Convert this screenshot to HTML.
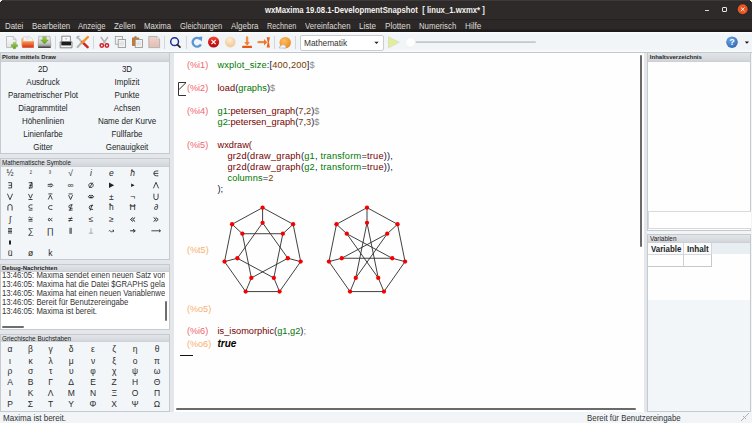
<!DOCTYPE html>
<html><head><meta charset="utf-8">
<style>
*{margin:0;padding:0;box-sizing:border-box}
html,body{width:752px;height:423px;overflow:hidden;background:#f1f5f8;font-family:"Liberation Sans",sans-serif;position:relative}
.t{position:absolute;white-space:pre;line-height:1}
.r{position:absolute}
svg{position:absolute;overflow:visible}
</style></head><body>
<div class="r" style="left:0px;top:0px;width:752px;height:20px;background:#2d2a29"></div>
<div class="r" style="left:0px;top:0px;width:752px;height:1px;background:#3d3a39"></div>
<div class="r" style="left:0px;top:19px;width:752px;height:1px;background:#242120"></div>
<div class="t" style="left:265.40px;top:6px;font-size:8.5px;color:#f4f2f0;font-weight:bold;font-style:normal;transform:scaleX(0.909);transform-origin:left;">wxMaxima 19.08.1-DevelopmentSnapshot  [ linux_1.wxmx* ]</div>
<div class="r" style="left:705px;top:10px;width:4px;height:1px;background:#d8d6d4"></div>
<div class="r" style="left:722px;top:7px;width:5px;height:5px;border:1px solid #e8e6e4;border-radius:1px"></div>
<svg style="left:0;top:0" width="752" height="20"><circle cx="742.7" cy="9.3" r="5.8" fill="#1f2a2c"/><circle cx="742.7" cy="9.3" r="5" fill="#e95420"/><path d="M740.9 7.5 L744.5 11.1 M744.5 7.5 L740.9 11.1" stroke="#fff" stroke-width="0.9"/></svg>
<div class="r" style="left:0px;top:0px;width:2px;height:1px;background:#f0f0f0"></div>
<div class="r" style="left:0px;top:1px;width:1px;height:1px;background:#e8e8e8"></div>
<div class="r" style="left:1px;top:1px;width:1px;height:1px;background:#121010"></div>
<div class="r" style="left:750px;top:0px;width:2px;height:1px;background:#f0f0f0"></div>
<div class="r" style="left:751px;top:1px;width:1px;height:1px;background:#e8e8e8"></div>
<div class="r" style="left:750px;top:1px;width:1px;height:1px;background:#121010"></div>
<div class="r" style="left:0px;top:20px;width:752px;height:12px;background:#2b2827"></div>
<div class="r" style="left:0px;top:29px;width:752px;height:3px;background:linear-gradient(#252221,#1b1918)"></div>
<div class="t" style="left:4.65px;top:22px;font-size:8.5px;color:#dedad6;font-weight:normal;font-style:normal;transform:scaleX(0.924);transform-origin:left;">Datei</div>
<div class="t" style="left:31.60px;top:22px;font-size:8.5px;color:#dedad6;font-weight:normal;font-style:normal;transform:scaleX(0.929);transform-origin:left;">Bearbeiten</div>
<div class="t" style="left:78.10px;top:22px;font-size:8.5px;color:#dedad6;font-weight:normal;font-style:normal;transform:scaleX(0.896);transform-origin:left;">Anzeige</div>
<div class="t" style="left:114.20px;top:22px;font-size:8.5px;color:#dedad6;font-weight:normal;font-style:normal;transform:scaleX(0.931);transform-origin:left;">Zellen</div>
<div class="t" style="left:144.10px;top:22px;font-size:8.5px;color:#dedad6;font-weight:normal;font-style:normal;transform:scaleX(0.911);transform-origin:left;">Maxima</div>
<div class="t" style="left:180.10px;top:22px;font-size:8.5px;color:#dedad6;font-weight:normal;font-style:normal;transform:scaleX(0.883);transform-origin:left;">Gleichungen</div>
<div class="t" style="left:230.80px;top:22px;font-size:8.5px;color:#dedad6;font-weight:normal;font-style:normal;transform:scaleX(0.939);transform-origin:left;">Algebra</div>
<div class="t" style="left:266.90px;top:22px;font-size:8.5px;color:#dedad6;font-weight:normal;font-style:normal;transform:scaleX(0.862);transform-origin:left;">Rechnen</div>
<div class="t" style="left:304.50px;top:22px;font-size:8.5px;color:#dedad6;font-weight:normal;font-style:normal;transform:scaleX(0.917);transform-origin:left;">Vereinfachen</div>
<div class="t" style="left:358.90px;top:22px;font-size:8.5px;color:#dedad6;font-weight:normal;font-style:normal;transform:scaleX(0.952);transform-origin:left;">Liste</div>
<div class="t" style="left:385.00px;top:22px;font-size:8.5px;color:#dedad6;font-weight:normal;font-style:normal;transform:scaleX(0.962);transform-origin:left;">Plotten</div>
<div class="t" style="left:418.90px;top:22px;font-size:8.5px;color:#dedad6;font-weight:normal;font-style:normal;transform:scaleX(0.916);transform-origin:left;">Numerisch</div>
<div class="t" style="left:464.90px;top:22px;font-size:8.5px;color:#dedad6;font-weight:normal;font-style:normal;transform:scaleX(0.965);transform-origin:left;">Hilfe</div>
<div class="r" style="left:0px;top:32px;width:752px;height:20px;background:linear-gradient(#fbfdfe,#f1f5f8 15%,#f1f5f8 85%,#f9fbfc)"></div>
<div class="r" style="left:0px;top:52px;width:752px;height:1px;background:#c2c8cd"></div>
<div class="r" style="left:55px;top:36px;width:1px;height:13px;background:#d3d7db"></div>
<div class="r" style="left:93px;top:36px;width:1px;height:13px;background:#d3d7db"></div>
<div class="r" style="left:164px;top:36px;width:1px;height:13px;background:#d3d7db"></div>
<div class="r" style="left:186px;top:36px;width:1px;height:13px;background:#d3d7db"></div>
<div class="r" style="left:274px;top:36px;width:1px;height:13px;background:#d3d7db"></div>
<div class="r" style="left:295px;top:36px;width:1px;height:13px;background:#d3d7db"></div>
<div class="r" style="left:300px;top:35px;width:84px;height:16px;background:#fff;border:1px solid #c9cdd1;border-radius:2px"></div>
<div class="t" style="left:303.80px;top:39px;font-size:8.5px;color:#333;font-weight:normal;font-style:normal;transform:scaleX(0.98);transform-origin:left;">Mathematik</div>
<svg style="left:0;top:0" width="752" height="60"><path d="M374.3 41.8 L378.7 41.8 L376.5 44 Z" fill="#222"/></svg>
<svg style="left:0;top:0" width="752" height="60" viewBox="0 0 752 60">
<defs>
<linearGradient id="gpage" x1="0" y1="0" x2="0" y2="1"><stop offset="0" stop-color="#fbfbfb"/><stop offset="1" stop-color="#e2e2e2"/></linearGradient>
<linearGradient id="ggreen" x1="0" y1="0" x2="0" y2="1"><stop offset="0" stop-color="#a6d455"/><stop offset="1" stop-color="#5a9a18"/></linearGradient>
<linearGradient id="gfold" x1="0" y1="0" x2="0" y2="1"><stop offset="0" stop-color="#f7a05a"/><stop offset="1" stop-color="#d52a0e"/></linearGradient>
<linearGradient id="gdrive" x1="0" y1="0" x2="0" y2="1"><stop offset="0" stop-color="#f2f2f2"/><stop offset="0.7" stop-color="#c8c8c8"/><stop offset="1" stop-color="#9a9a9a"/></linearGradient>
<linearGradient id="gred" x1="0" y1="0" x2="0" y2="1"><stop offset="0" stop-color="#f0553a"/><stop offset="0.5" stop-color="#d81818"/><stop offset="1" stop-color="#a80c0c"/></linearGradient>
<radialGradient id="gpeach" cx="0.45" cy="0.3" r="0.7"><stop offset="0" stop-color="#fff0d8"/><stop offset="0.5" stop-color="#f8d8b0"/><stop offset="1" stop-color="#f0c898"/></radialGradient>
<linearGradient id="gorange" x1="0" y1="0" x2="0" y2="1"><stop offset="0" stop-color="#f8a050"/><stop offset="1" stop-color="#e8500c"/></linearGradient>
<radialGradient id="gsun" cx="0.4" cy="0.35" r="0.7"><stop offset="0" stop-color="#fcc060"/><stop offset="1" stop-color="#ec8a1c"/></radialGradient>
<linearGradient id="gpink" x1="0" y1="0" x2="0" y2="1"><stop offset="0" stop-color="#f0d4cc"/><stop offset="1" stop-color="#e4bcb2"/></linearGradient>
</defs>
<path d="M6.5 36.5 L13.2 36.5 L16 39.3 L16 47.5 L6.5 47.5 Z" fill="url(#gpage)" stroke="#b4b4b4" stroke-width="0.8"/>
<path d="M13.2 36.5 L13.2 39.3 L16 39.3" fill="#e8e8e8" stroke="#b4b4b4" stroke-width="0.6"/>
<path d="M13.3 42.6 h2.2 v2 h2 v2.2 h-2 v2 h-2.2 v-2 h-2 v-2.2 h2 Z" fill="url(#ggreen)" stroke="#6a9a2a" stroke-width="0.35"/>
<path d="M21.3 38.2 L23.5 38.2 L23.5 46 L21.3 46 Z" fill="#f5b06a"/>
<path d="M23.3 36.8 L29.6 36.8 L32.6 39.2 L32.6 43 L23.3 43 Z" fill="#f6f6f6" stroke="#c4c4c4" stroke-width="0.6"/>
<path d="M26 37.8 L28 37.8 M26 39 L30 39" stroke="#c8c8c8" stroke-width="0.5"/>
<path d="M22.2 41 L34 41 L33.8 47.8 L22.2 47.8 Z" fill="url(#gfold)"/>
<path d="M22.4 41.3 L33.6 41.3" stroke="#f8c090" stroke-width="0.6"/>
<path d="M38.8 36.3 L50 36.3 L51 46 L38 46 Z" fill="url(#gdrive)" stroke="#9c9c9c" stroke-width="0.6"/>
<rect x="38" y="46.2" width="12.9" height="1.7" rx="0.6" fill="#4a4a4a"/>
<path d="M42.8 36.8 L46.2 36.8 L46.2 40 L48.3 40 L44.5 43.9 L40.7 40 L42.8 40 Z" fill="url(#ggreen)" stroke="#6a9a20" stroke-width="0.4"/>
<path d="M61.8 36.2 L70.4 36.2 L70.4 41.5 L61.8 41.5 Z" fill="#fafafa" stroke="#707070" stroke-width="0.8"/>
<path d="M65 38.6 L67.2 38.6 L66.1 39.8 Z" fill="#888"/>
<path d="M60.2 41.8 L72 41.8 L72 47.8 L60.2 47.8 Z" fill="#f4f4f4" stroke="#6c6c6c" stroke-width="0.8"/>
<rect x="61.3" y="42" width="9.8" height="3.4" fill="#1c1c1c"/>
<path d="M70.6 46.2 L71.3 46.2" stroke="#7fc040" stroke-width="0.8"/>
<path d="M77.6 47 L82.5 41.8" stroke="#b4b4b4" stroke-width="2" stroke-linecap="round"/>
<path d="M77.8 37.6 L82 42" stroke="#bcbcbc" stroke-width="1.9" stroke-linecap="round"/>
<path d="M76.8 38.5 A2 2 0 0 1 79.5 36.4" stroke="#a8a8a8" stroke-width="1.2" fill="none"/>
<path d="M82.3 42.2 L87.6 47.1" stroke="#d02424" stroke-width="2.5" stroke-linecap="round"/>
<path d="M87.8 37.2 L82.2 42.6" stroke="#f0962c" stroke-width="2.5" stroke-linecap="round"/>
<path d="M100.8 37 L105.2 43 M108 37 L103.6 43" stroke="#b4b4b4" stroke-width="1.6"/>
<circle cx="101.8" cy="45.5" r="1.7" fill="none" stroke="#d01e2a" stroke-width="1.5"/>
<circle cx="106.9" cy="45.5" r="1.7" fill="none" stroke="#d01e2a" stroke-width="1.5"/>
<rect x="115.3" y="36.4" width="7.2" height="7.8" fill="#f2f2f2" stroke="#9a9a9a" stroke-width="0.8"/>
<rect x="118.2" y="39.6" width="7.4" height="7.8" fill="#f2f2f2" stroke="#909090" stroke-width="0.8"/>
<path d="M119.5 42 h4.5 M119.5 43.5 h4.5 M119.5 45 h4.5" stroke="#c8c8c8" stroke-width="0.5"/>
<rect x="132" y="37.4" width="7.2" height="8.6" rx="0.4" fill="#c47a34"/>
<rect x="134.3" y="36.2" width="2.2" height="2.2" fill="#888"/>
<rect x="135.2" y="39.6" width="7.4" height="7.8" fill="#f2f2f2" stroke="#8e8e8e" stroke-width="0.8"/>
<path d="M136.5 42 h4.5 M136.5 43.5 h4.5 M136.5 45 h4.5" stroke="#c8c8c8" stroke-width="0.5"/>
<path d="M148.8 36.5 L157 36.5 L159.6 39 L159.6 47.6 L148.8 47.6 Z" fill="url(#gpink)" stroke="#a8a8a8" stroke-width="0.8"/>
<path d="M156.5 36.8 L156.5 39.3 L159.4 39.3" fill="#f4f4f4" stroke="#b0b0b0" stroke-width="0.5"/>
<circle cx="174.6" cy="41.7" r="3.9" fill="none" stroke="#1d2c98" stroke-width="1.5"/>
<path d="M177.4 44.6 L180 47.1" stroke="#222" stroke-width="1.7" stroke-linecap="round"/>
<path d="M200.2 39.2 A4.4 4.4 0 1 0 200.9 44.4" fill="none" stroke="#5a96d6" stroke-width="2.3"/>
<path d="M197.2 37.2 L202.3 36.6 L201.8 41.6 Z" fill="#5a96d6"/>
<circle cx="213.6" cy="42" r="5.6" fill="url(#gred)"/>
<path d="M211.5 39.9 L215.7 44.1 M215.7 39.9 L211.5 44.1" stroke="#fff" stroke-width="1.3"/>
<circle cx="230.3" cy="42.1" r="5.3" fill="url(#gpeach)"/>
<path d="M247.1 37.4 L247.1 43" stroke="#f49048" stroke-width="2.4" stroke-linecap="round"/>
<path d="M244.2 42.2 L250 42.2 L247.1 45.4 Z" fill="#f07a30"/>
<rect x="242.2" y="45.8" width="9.8" height="2.2" rx="0.5" fill="#e45a12"/>
<path d="M258.5 42.2 L265 42.2" stroke="#f08a3a" stroke-width="2.2" stroke-linecap="round"/>
<path d="M264 39 L267.2 42.2 L264 45.4 Z" fill="#ec7426"/>
<path d="M266.6 37.2 L270 37.2 L268.9 42.2 L270 47.4 L266.6 47.4 L267.7 42.2 Z" fill="#ea6420"/>
<circle cx="285.2" cy="42.6" r="5.7" fill="url(#gsun)"/>
<path d="M279.2 48 Q279 45.9 281.2 46 Q282 43.9 284 45 Q286.2 45 286 48 Z" fill="#f4f6f8" stroke="#a8acb0" stroke-width="0.6"/>
<path d="M388.5 36.8 L399.3 42.3 L388.5 47.8 Z" fill="#e4eca4" stroke="#c8d890" stroke-width="0.5"/>
<rect x="413" y="41.2" width="123" height="1.8" rx="0.9" fill="#c6c8c6"/>
<circle cx="410.5" cy="42.2" r="5" fill="#fdfdfb" stroke="#e8eae8" stroke-width="0.5"/>
<defs><radialGradient id="ghelp" cx="0.4" cy="0.3" r="0.8"><stop offset="0" stop-color="#6ea6e4"/><stop offset="1" stop-color="#2a64b0"/></radialGradient></defs>
<circle cx="732" cy="42.2" r="5.8" fill="url(#ghelp)"/>
<text x="732" y="45.4" font-family="Liberation Sans" font-size="8.5" font-weight="bold" fill="#fff" text-anchor="middle">?</text>
<path d="M744.8 41.6 L749 41.6 L746.9 43.8 Z" fill="#111"/>
</svg>
<div class="r" style="left:0px;top:53px;width:170px;height:359px;background:#e3e7eb"></div>
<div class="r" style="left:0px;top:52px;width:170px;height:102px;background:#f2f6f9;border:1px solid #c6cacd"></div>
<div class="r" style="left:1px;top:53px;width:168px;height:9px;background:linear-gradient(#e2e5e8,#d4d8dc 80%,#c9cdd1)"></div>
<div class="t" style="left:2.00px;top:54px;font-size:6px;color:#262626;font-weight:bold;font-style:normal;transform-origin:left;">Plotte mittels Draw</div>
<div class="r" style="left:0px;top:158px;width:170px;height:102px;background:#f2f6f9;border:1px solid #c6cacd"></div>
<div class="r" style="left:1px;top:159px;width:168px;height:8px;background:linear-gradient(#e2e5e8,#d4d8dc 80%,#c9cdd1)"></div>
<div class="t" style="left:2.00px;top:159px;font-size:7px;color:#1a1a1a;font-weight:normal;font-style:normal;transform:scaleX(0.9);transform-origin:left;">Mathematische Symbole</div>
<div class="r" style="left:0px;top:264px;width:170px;height:66px;background:#fff;border:1px solid #c6cacd"></div>
<div class="r" style="left:1px;top:265px;width:168px;height:7px;background:linear-gradient(#e2e5e8,#d4d8dc 80%,#c9cdd1)"></div>
<div class="t" style="left:2.00px;top:265px;font-size:6px;color:#262626;font-weight:bold;font-style:normal;transform-origin:left;">Debug-Nachrichten</div>
<div class="r" style="left:0px;top:334px;width:170px;height:78px;background:#f2f6f9;border:1px solid #c6cacd"></div>
<div class="r" style="left:1px;top:335px;width:168px;height:7px;background:linear-gradient(#e2e5e8,#d4d8dc 80%,#c9cdd1)"></div>
<div class="t" style="left:2.00px;top:335px;font-size:7px;color:#1a1a1a;font-weight:normal;font-style:normal;transform:scaleX(0.91);transform-origin:left;">Griechische Buchstaben</div>
<div class="t" style="left:-57.30px;width:200px;text-align:center;top:65px;font-size:8.5px;color:#1e1e1e;font-weight:normal;font-style:normal;transform:scaleX(0.94);transform-origin:center;">2D</div>
<div class="t" style="left:26.60px;width:200px;text-align:center;top:65px;font-size:8.5px;color:#1e1e1e;font-weight:normal;font-style:normal;transform:scaleX(0.94);transform-origin:center;">3D</div>
<div class="t" style="left:-57.30px;width:200px;text-align:center;top:78px;font-size:8.5px;color:#1e1e1e;font-weight:normal;font-style:normal;transform:scaleX(0.94);transform-origin:center;">Ausdruck</div>
<div class="t" style="left:26.60px;width:200px;text-align:center;top:78px;font-size:8.5px;color:#1e1e1e;font-weight:normal;font-style:normal;transform:scaleX(0.94);transform-origin:center;">Implizit</div>
<div class="t" style="left:-57.30px;width:200px;text-align:center;top:91px;font-size:8.5px;color:#1e1e1e;font-weight:normal;font-style:normal;transform:scaleX(0.94);transform-origin:center;">Parametrischer Plot</div>
<div class="t" style="left:26.60px;width:200px;text-align:center;top:91px;font-size:8.5px;color:#1e1e1e;font-weight:normal;font-style:normal;transform:scaleX(0.94);transform-origin:center;">Punkte</div>
<div class="t" style="left:-57.30px;width:200px;text-align:center;top:104px;font-size:8.5px;color:#1e1e1e;font-weight:normal;font-style:normal;transform:scaleX(0.94);transform-origin:center;">Diagrammtitel</div>
<div class="t" style="left:26.60px;width:200px;text-align:center;top:104px;font-size:8.5px;color:#1e1e1e;font-weight:normal;font-style:normal;transform:scaleX(0.94);transform-origin:center;">Achsen</div>
<div class="t" style="left:-57.30px;width:200px;text-align:center;top:117px;font-size:8.5px;color:#1e1e1e;font-weight:normal;font-style:normal;transform:scaleX(0.94);transform-origin:center;">Höhenlinien</div>
<div class="t" style="left:26.60px;width:200px;text-align:center;top:117px;font-size:8.5px;color:#1e1e1e;font-weight:normal;font-style:normal;transform:scaleX(0.94);transform-origin:center;">Name der Kurve</div>
<div class="t" style="left:-57.30px;width:200px;text-align:center;top:130px;font-size:8.5px;color:#1e1e1e;font-weight:normal;font-style:normal;transform:scaleX(0.94);transform-origin:center;">Linienfarbe</div>
<div class="t" style="left:26.60px;width:200px;text-align:center;top:130px;font-size:8.5px;color:#1e1e1e;font-weight:normal;font-style:normal;transform:scaleX(0.94);transform-origin:center;">Füllfarbe</div>
<div class="t" style="left:-57.30px;width:200px;text-align:center;top:143px;font-size:8.5px;color:#1e1e1e;font-weight:normal;font-style:normal;transform:scaleX(0.94);transform-origin:center;">Gitter</div>
<div class="t" style="left:26.60px;width:200px;text-align:center;top:143px;font-size:8.5px;color:#1e1e1e;font-weight:normal;font-style:normal;transform:scaleX(0.94);transform-origin:center;">Genauigkeit</div>
<div class="t" style="left:-90.00px;width:200px;text-align:center;top:169px;font-size:8.5px;color:#222;font-weight:normal;font-style:normal;transform-origin:center;">½</div>
<div class="t" style="left:-69.50px;width:200px;text-align:center;top:169px;font-size:8.5px;color:#333;font-weight:normal;font-style:normal;transform:scaleX(0.8);transform-origin:center;">²</div>
<div class="t" style="left:-49.70px;width:200px;text-align:center;top:169px;font-size:8.5px;color:#333;font-weight:normal;font-style:normal;transform:scaleX(0.8);transform-origin:center;">³</div>
<div class="t" style="left:-29.40px;width:200px;text-align:center;top:169px;font-size:8.5px;color:#222;font-weight:normal;font-style:normal;transform-origin:center;">√</div>
<div class="t" style="left:-9.00px;width:200px;text-align:center;top:169px;font-size:8.5px;color:#222;font-weight:normal;font-style:normal;transform-origin:center;"><i>i</i></div>
<div class="t" style="left:11.40px;width:200px;text-align:center;top:169px;font-size:8.5px;color:#222;font-weight:normal;font-style:normal;transform-origin:center;"><i>e</i></div>
<div class="t" style="left:32.70px;width:200px;text-align:center;top:169px;font-size:8.5px;color:#222;font-weight:normal;font-style:normal;transform-origin:center;"><i>ħ</i></div>
<div class="t" style="left:-29.40px;width:200px;text-align:center;top:181px;font-size:8.5px;color:#222;font-weight:normal;font-style:normal;transform-origin:center;">∞</div>
<div class="t" style="left:11.40px;width:200px;text-align:center;top:193px;font-size:8.5px;color:#222;font-weight:normal;font-style:normal;transform-origin:center;">±</div>
<div class="t" style="left:32.70px;width:200px;text-align:center;top:193px;font-size:8.5px;color:#222;font-weight:normal;font-style:normal;transform-origin:center;">¬</div>
<div class="t" style="left:11.40px;width:200px;text-align:center;top:203px;font-size:8.5px;color:#222;font-weight:normal;font-style:normal;transform-origin:center;">ħ</div>
<div class="t" style="left:32.70px;width:200px;text-align:center;top:203px;font-size:8.5px;color:#222;font-weight:normal;font-style:normal;transform-origin:center;">Ħ</div>
<div class="t" style="left:56.00px;width:200px;text-align:center;top:203px;font-size:8.5px;color:#222;font-weight:normal;font-style:normal;transform-origin:center;">∂</div>
<div class="t" style="left:-90.00px;width:200px;text-align:center;top:215px;font-size:8.5px;color:#222;font-weight:normal;font-style:normal;transform-origin:center;">∫</div>
<div class="t" style="left:-29.40px;width:200px;text-align:center;top:215px;font-size:8.5px;color:#222;font-weight:normal;font-style:normal;transform-origin:center;">≠</div>
<div class="t" style="left:-9.00px;width:200px;text-align:center;top:215px;font-size:8.5px;color:#222;font-weight:normal;font-style:normal;transform-origin:center;">≤</div>
<div class="t" style="left:11.40px;width:200px;text-align:center;top:215px;font-size:8.5px;color:#222;font-weight:normal;font-style:normal;transform-origin:center;">≥</div>
<div class="t" style="left:-69.50px;width:200px;text-align:center;top:227px;font-size:8.5px;color:#222;font-weight:normal;font-style:normal;transform-origin:center;">∑</div>
<div class="t" style="left:-49.70px;width:200px;text-align:center;top:227px;font-size:8.5px;color:#222;font-weight:normal;font-style:normal;transform-origin:center;">∏</div>
<div class="t" style="left:-90.00px;width:200px;text-align:center;top:249px;font-size:8.5px;color:#222;font-weight:normal;font-style:normal;transform-origin:center;">ü</div>
<div class="t" style="left:-69.50px;width:200px;text-align:center;top:249px;font-size:8.5px;color:#222;font-weight:normal;font-style:normal;transform-origin:center;">ø</div>
<div class="t" style="left:-49.70px;width:200px;text-align:center;top:249px;font-size:8.5px;color:#222;font-weight:normal;font-style:normal;transform-origin:center;">k</div>
<svg style="left:0;top:0" width="752" height="423">
<path transform="translate(156 173.4)" d="M2.3 -2.4 H0.2 A2.4 2.4 0 0 0 0.2 2.4 H2.3 M-2.2 0 H2.3" fill="none" stroke="#262626" stroke-width="0.85"/>
<path transform="translate(10 185.3)" d="M-1.8 -2.6 H1.6 V2.6 H-1.8 M-1.4 0 H1.6" fill="none" stroke="#262626" stroke-width="0.85"/>
<path transform="translate(30.5 185.3)" d="M-1.8 -2.6 H1.6 V2.6 H-1.8 M-1.4 0 H1.6 M1.3 -3.4 L-1.1 3.4" fill="none" stroke="#262626" stroke-width="0.85"/>
<path transform="translate(50.3 185.3)" d="M-2.6 -0.9 H1.4 M-2.6 0.9 H1.4 M0.6 -2 L2.6 0 L0.6 2" fill="none" stroke="#262626" stroke-width="0.85"/>
<path transform="translate(91 185.3)" d="M0 -2.2 A2.2 2.2 0 1 0 0.001 -2.2 M1.9 -2.7 L-1.9 2.7" fill="none" stroke="#262626" stroke-width="0.85"/>
<path transform="translate(111.4 185.3)" d="M-2.4 -2.7 L2.8 0 L-2.4 2.7 Z" fill="#222" stroke="none"/>
<path transform="translate(132.7 185.3)" d="M-1.6 -1.7 L1.9 0 L-1.6 1.7 Z" fill="#222" stroke="none"/>
<path transform="translate(156 185.3)" d="M-2.6 3 L0 -3 L2.6 3" fill="none" stroke="#262626" stroke-width="0.85"/>
<path transform="translate(10 196.7)" d="M-2.6 -3 L0 3 L2.6 -3" fill="none" stroke="#262626" stroke-width="0.85"/>
<path transform="translate(30.5 196.7)" d="M-2 -2.8 L0 1.6 L2 -2.8 M-2 2.8 H2" fill="none" stroke="#262626" stroke-width="0.85"/>
<path transform="translate(50.3 196.7)" d="M-2 -2.8 H2 M-2 2.8 L0 -1.6 L2 2.8" fill="none" stroke="#262626" stroke-width="0.85"/>
<path transform="translate(70.6 196.7)" d="M-2 -2.8 H2 M-2 -1.6 L0 2.8 L2 -1.6" fill="none" stroke="#262626" stroke-width="0.85"/>
<path transform="translate(91 196.7)" d="M-1.4 -0.8 H1.4 M-1.4 0.8 H1.4 M-0.9 -1.8 L-2.6 0 L-0.9 1.8 M0.9 -1.8 L2.6 0 L0.9 1.8" fill="none" stroke="#262626" stroke-width="1.0"/>
<path transform="translate(156 196.7)" d="M-2.1 -3 V0.9 A2.1 2.1 0 0 0 2.1 0.9 V-3" fill="none" stroke="#262626" stroke-width="0.85"/>
<path transform="translate(10 207.5)" d="M-2.1 3 V-0.9 A2.1 2.1 0 0 1 2.1 -0.9 V3" fill="none" stroke="#262626" stroke-width="0.85"/>
<path transform="translate(30.5 207.5)" d="M2 -2.6 H0 A1.7 1.7 0 0 0 0 0.8 H2 M-1.8 2.6 H2" fill="none" stroke="#262626" stroke-width="0.85"/>
<path transform="translate(50.3 207.5)" d="M2.1 -1.9 H0.1 A1.9 1.9 0 0 0 0.1 1.9 H2.1" fill="none" stroke="#262626" stroke-width="0.85"/>
<path transform="translate(70.6 207.5)" d="M2 -2.6 H0 A1.7 1.7 0 0 0 0 0.8 H2 M-1.8 2.6 H2 M1.2 -3.2 L-0.8 3.2" fill="none" stroke="#262626" stroke-width="0.85"/>
<path transform="translate(91 207.5)" d="M2.1 -1.9 H0.1 A1.9 1.9 0 0 0 0.1 1.9 H2.1 M1.2 -3 L-0.8 3" fill="none" stroke="#262626" stroke-width="0.85"/>
<path transform="translate(30.5 219.5)" d="M-2 -1.8 Q-1 -2.8 0 -1.8 T2 -1.8 M-2 0 H2 M-2 1.6 H2" fill="none" stroke="#262626" stroke-width="0.85"/>
<path transform="translate(50.3 219.5)" d="M2 -1.2 C0.5 -1.2 0 1.4 -1.2 1.4 C-2.2 1.4 -2.2 -1.2 -1.2 -1.2 C0 -1.2 0.5 1.4 2 1.4" fill="none" stroke="#262626" stroke-width="0.85"/>
<path transform="translate(132.7 219.5)" d="M0.2 -2 L-2.2 0 L0.2 2 M2.4 -2 L0 0 L2.4 2" fill="none" stroke="#262626" stroke-width="1.0"/>
<path transform="translate(156 219.5)" d="M-0.2 -2 L2.2 0 L-0.2 2 M-2.4 -2 L0 0 L-2.4 2" fill="none" stroke="#262626" stroke-width="1.0"/>
<path transform="translate(10 230.8)" d="M-2 -2.2 H2 M-2 -0.75 H2 M-2 0.75 H2 M-2 2.2 H2" fill="none" stroke="#262626" stroke-width="0.85"/>
<path transform="translate(70.6 230.8)" d="M-0.6 -3 V3 M0.6 -3 V3" fill="none" stroke="#262626" stroke-width="0.85"/>
<path transform="translate(91 230.8)" d="M0 -2.6 V2.4 M-2.2 2.4 H2.2" fill="none" stroke="#9a9a9a" stroke-width="0.8"/>
<path transform="translate(111.4 230.8)" d="M-2.6 0.4 Q-1.8 -0.8 -0.9 0.4 T0.9 0.4 L2.4 0 M1.4 -1 L2.6 0 L1.4 1" fill="none" stroke="#262626" stroke-width="0.85"/>
<path transform="translate(132.7 230.8)" d="M-2.6 0 H1.4 M0.4 -1.5 L2.6 0 L0.4 1.5" fill="none" stroke="#262626" stroke-width="1.0"/>
<path transform="translate(156 230.8)" d="M-4.6 0 H4.2 M3 -1.3 L4.6 0 L3 1.3" fill="none" stroke="#262626" stroke-width="0.85"/>
<path transform="translate(10 242.6)" d="M-1 -2 H1 V2 H-1 Z" fill="#222" stroke="none"/>
</svg>
<div class="r" style="left:1px;top:272px;width:164px;height:57px;overflow:hidden">
<div class="t" style="left:1.00px;top:-1px;font-size:8.5px;color:#333;font-weight:normal;font-style:normal;transform:scaleX(0.91);transform-origin:left;">13:46:05: Maxima sendet einen neuen Satz von </div>
<div class="t" style="left:1.00px;top:8px;font-size:8.5px;color:#333;font-weight:normal;font-style:normal;transform:scaleX(0.91);transform-origin:left;">13:46:05: Maxima hat die Datei $GRAPHS gelad</div>
<div class="t" style="left:1.00px;top:17px;font-size:8.5px;color:#333;font-weight:normal;font-style:normal;transform:scaleX(0.91);transform-origin:left;">13:46:05: Maxima hat einen neuen Variablenwe</div>
<div class="t" style="left:1.00px;top:26px;font-size:8.5px;color:#333;font-weight:normal;font-style:normal;transform:scaleX(0.91);transform-origin:left;">13:46:05: Bereit für Benutzereingabe</div>
<div class="t" style="left:1.00px;top:35px;font-size:8.5px;color:#333;font-weight:normal;font-style:normal;transform:scaleX(0.91);transform-origin:left;">13:46:05: Maxima ist bereit.</div>
</div>
<div class="r" style="left:165px;top:301px;width:2px;height:20px;background:#6e6e6e;border-radius:1px"></div>
<div class="r" style="left:2px;top:326px;width:22px;height:2px;background:#6e6e6e;border-radius:1px"></div>
<div class="t" style="left:-90.00px;width:200px;text-align:center;top:345px;font-size:8.5px;color:#2a2a2a;font-weight:normal;font-style:normal;transform-origin:center;">α</div>
<div class="t" style="left:-69.50px;width:200px;text-align:center;top:345px;font-size:8.5px;color:#2a2a2a;font-weight:normal;font-style:normal;transform-origin:center;">β</div>
<div class="t" style="left:-49.30px;width:200px;text-align:center;top:345px;font-size:8.5px;color:#2a2a2a;font-weight:normal;font-style:normal;transform-origin:center;">γ</div>
<div class="t" style="left:-28.80px;width:200px;text-align:center;top:345px;font-size:8.5px;color:#2a2a2a;font-weight:normal;font-style:normal;transform-origin:center;">δ</div>
<div class="t" style="left:-7.00px;width:200px;text-align:center;top:345px;font-size:8.5px;color:#2a2a2a;font-weight:normal;font-style:normal;transform-origin:center;">ε</div>
<div class="t" style="left:14.20px;width:200px;text-align:center;top:345px;font-size:8.5px;color:#2a2a2a;font-weight:normal;font-style:normal;transform-origin:center;">ζ</div>
<div class="t" style="left:35.00px;width:200px;text-align:center;top:345px;font-size:8.5px;color:#2a2a2a;font-weight:normal;font-style:normal;transform-origin:center;">η</div>
<div class="t" style="left:57.00px;width:200px;text-align:center;top:345px;font-size:8.5px;color:#2a2a2a;font-weight:normal;font-style:normal;transform-origin:center;">θ</div>
<div class="t" style="left:-90.00px;width:200px;text-align:center;top:357px;font-size:8.5px;color:#2a2a2a;font-weight:normal;font-style:normal;transform-origin:center;">ι</div>
<div class="t" style="left:-69.50px;width:200px;text-align:center;top:357px;font-size:8.5px;color:#2a2a2a;font-weight:normal;font-style:normal;transform-origin:center;">κ</div>
<div class="t" style="left:-49.30px;width:200px;text-align:center;top:357px;font-size:8.5px;color:#2a2a2a;font-weight:normal;font-style:normal;transform-origin:center;">λ</div>
<div class="t" style="left:-28.80px;width:200px;text-align:center;top:357px;font-size:8.5px;color:#2a2a2a;font-weight:normal;font-style:normal;transform-origin:center;">μ</div>
<div class="t" style="left:-7.00px;width:200px;text-align:center;top:357px;font-size:8.5px;color:#2a2a2a;font-weight:normal;font-style:normal;transform-origin:center;">ν</div>
<div class="t" style="left:14.20px;width:200px;text-align:center;top:357px;font-size:8.5px;color:#2a2a2a;font-weight:normal;font-style:normal;transform-origin:center;">ξ</div>
<div class="t" style="left:35.00px;width:200px;text-align:center;top:357px;font-size:8.5px;color:#2a2a2a;font-weight:normal;font-style:normal;transform-origin:center;">ο</div>
<div class="t" style="left:57.00px;width:200px;text-align:center;top:357px;font-size:8.5px;color:#2a2a2a;font-weight:normal;font-style:normal;transform-origin:center;">π</div>
<div class="t" style="left:-90.00px;width:200px;text-align:center;top:367px;font-size:8.5px;color:#2a2a2a;font-weight:normal;font-style:normal;transform-origin:center;">ρ</div>
<div class="t" style="left:-69.50px;width:200px;text-align:center;top:367px;font-size:8.5px;color:#2a2a2a;font-weight:normal;font-style:normal;transform-origin:center;">σ</div>
<div class="t" style="left:-49.30px;width:200px;text-align:center;top:367px;font-size:8.5px;color:#2a2a2a;font-weight:normal;font-style:normal;transform-origin:center;">τ</div>
<div class="t" style="left:-28.80px;width:200px;text-align:center;top:367px;font-size:8.5px;color:#2a2a2a;font-weight:normal;font-style:normal;transform-origin:center;">υ</div>
<div class="t" style="left:-7.00px;width:200px;text-align:center;top:367px;font-size:8.5px;color:#2a2a2a;font-weight:normal;font-style:normal;transform-origin:center;">φ</div>
<div class="t" style="left:14.20px;width:200px;text-align:center;top:367px;font-size:8.5px;color:#2a2a2a;font-weight:normal;font-style:normal;transform-origin:center;">χ</div>
<div class="t" style="left:35.00px;width:200px;text-align:center;top:367px;font-size:8.5px;color:#2a2a2a;font-weight:normal;font-style:normal;transform-origin:center;">ψ</div>
<div class="t" style="left:57.00px;width:200px;text-align:center;top:367px;font-size:8.5px;color:#2a2a2a;font-weight:normal;font-style:normal;transform-origin:center;">ω</div>
<div class="t" style="left:-90.00px;width:200px;text-align:center;top:378px;font-size:8.5px;color:#2a2a2a;font-weight:normal;font-style:normal;transform-origin:center;">Α</div>
<div class="t" style="left:-69.50px;width:200px;text-align:center;top:378px;font-size:8.5px;color:#2a2a2a;font-weight:normal;font-style:normal;transform-origin:center;">Β</div>
<div class="t" style="left:-49.30px;width:200px;text-align:center;top:378px;font-size:8.5px;color:#2a2a2a;font-weight:normal;font-style:normal;transform-origin:center;">Γ</div>
<div class="t" style="left:-28.80px;width:200px;text-align:center;top:378px;font-size:8.5px;color:#2a2a2a;font-weight:normal;font-style:normal;transform-origin:center;">Δ</div>
<div class="t" style="left:-7.00px;width:200px;text-align:center;top:378px;font-size:8.5px;color:#2a2a2a;font-weight:normal;font-style:normal;transform-origin:center;">Ε</div>
<div class="t" style="left:14.20px;width:200px;text-align:center;top:378px;font-size:8.5px;color:#2a2a2a;font-weight:normal;font-style:normal;transform-origin:center;">Ζ</div>
<div class="t" style="left:35.00px;width:200px;text-align:center;top:378px;font-size:8.5px;color:#2a2a2a;font-weight:normal;font-style:normal;transform-origin:center;">Η</div>
<div class="t" style="left:57.00px;width:200px;text-align:center;top:378px;font-size:8.5px;color:#2a2a2a;font-weight:normal;font-style:normal;transform-origin:center;">Θ</div>
<div class="t" style="left:-90.00px;width:200px;text-align:center;top:389px;font-size:8.5px;color:#2a2a2a;font-weight:normal;font-style:normal;transform-origin:center;">Ι</div>
<div class="t" style="left:-69.50px;width:200px;text-align:center;top:389px;font-size:8.5px;color:#2a2a2a;font-weight:normal;font-style:normal;transform-origin:center;">Κ</div>
<div class="t" style="left:-49.30px;width:200px;text-align:center;top:389px;font-size:8.5px;color:#2a2a2a;font-weight:normal;font-style:normal;transform-origin:center;">Λ</div>
<div class="t" style="left:-28.80px;width:200px;text-align:center;top:389px;font-size:8.5px;color:#2a2a2a;font-weight:normal;font-style:normal;transform-origin:center;">Μ</div>
<div class="t" style="left:-7.00px;width:200px;text-align:center;top:389px;font-size:8.5px;color:#2a2a2a;font-weight:normal;font-style:normal;transform-origin:center;">Ν</div>
<div class="t" style="left:14.20px;width:200px;text-align:center;top:389px;font-size:8.5px;color:#2a2a2a;font-weight:normal;font-style:normal;transform-origin:center;">Ξ</div>
<div class="t" style="left:35.00px;width:200px;text-align:center;top:389px;font-size:8.5px;color:#2a2a2a;font-weight:normal;font-style:normal;transform-origin:center;">Ο</div>
<div class="t" style="left:57.00px;width:200px;text-align:center;top:389px;font-size:8.5px;color:#2a2a2a;font-weight:normal;font-style:normal;transform-origin:center;">Π</div>
<div class="t" style="left:-90.00px;width:200px;text-align:center;top:400px;font-size:8.5px;color:#2a2a2a;font-weight:normal;font-style:normal;transform-origin:center;">Ρ</div>
<div class="t" style="left:-69.50px;width:200px;text-align:center;top:400px;font-size:8.5px;color:#2a2a2a;font-weight:normal;font-style:normal;transform-origin:center;">Σ</div>
<div class="t" style="left:-49.30px;width:200px;text-align:center;top:400px;font-size:8.5px;color:#2a2a2a;font-weight:normal;font-style:normal;transform-origin:center;">Τ</div>
<div class="t" style="left:-28.80px;width:200px;text-align:center;top:400px;font-size:8.5px;color:#2a2a2a;font-weight:normal;font-style:normal;transform-origin:center;">Υ</div>
<div class="t" style="left:-7.00px;width:200px;text-align:center;top:400px;font-size:8.5px;color:#2a2a2a;font-weight:normal;font-style:normal;transform-origin:center;">Φ</div>
<div class="t" style="left:14.20px;width:200px;text-align:center;top:400px;font-size:8.5px;color:#2a2a2a;font-weight:normal;font-style:normal;transform-origin:center;">Χ</div>
<div class="t" style="left:35.00px;width:200px;text-align:center;top:400px;font-size:8.5px;color:#2a2a2a;font-weight:normal;font-style:normal;transform-origin:center;">Ψ</div>
<div class="t" style="left:57.00px;width:200px;text-align:center;top:400px;font-size:8.5px;color:#2a2a2a;font-weight:normal;font-style:normal;transform-origin:center;">Ω</div>
<div class="r" style="left:170px;top:53px;width:4px;height:359px;background:#e3e7eb"></div>
<div class="r" style="left:174px;top:53px;width:470px;height:359px;background:#fdfefd"></div>
<div class="t" style="left:187.2px;top:61px;font-size:8.5px;color:#f0646e;transform:scaleX(1.066);transform-origin:left">(%i1)</div>
<div class="t" style="left:217.5px;top:61.00px;font-size:9.25px;letter-spacing:0.14px"><span style="color:#007800">wxplot_size</span><span style="color:#101040">:</span><span style="color:#101040">[</span><span style="color:#7a3a00">400</span><span style="color:#101040">,</span><span style="color:#7a3a00">200</span><span style="color:#101040">]</span><span style="color:#8a8a8a">$</span></div>
<svg style="left:0;top:0" width="752" height="423"><path d="M186 82.5 H178.5 V95.5 H186 M185.6 83 L178.8 89.8" fill="none" stroke="#333" stroke-width="1"/></svg>
<div class="t" style="left:187.2px;top:84px;font-size:8.5px;color:#f0646e;transform:scaleX(1.066);transform-origin:left">(%i2)</div>
<div class="t" style="left:217.5px;top:84.00px;font-size:9.25px;letter-spacing:0.05px"><span style="color:#760000">load</span><span style="color:#101040">(</span><span style="color:#007800">graphs</span><span style="color:#101040">)</span><span style="color:#8a8a8a">$</span></div>
<div class="t" style="left:187.2px;top:107px;font-size:8.5px;color:#f0646e;transform:scaleX(1.066);transform-origin:left">(%i4)</div>
<div class="t" style="left:217.5px;top:107.00px;font-size:9.25px;letter-spacing:0.0px"><span style="color:#007800">g1</span><span style="color:#101040">:</span><span style="color:#760000">petersen_graph</span><span style="color:#101040">(</span><span style="color:#7a3a00">7</span><span style="color:#101040">,</span><span style="color:#7a3a00">2</span><span style="color:#101040">)</span><span style="color:#8a8a8a">$</span></div>
<div class="t" style="left:217.5px;top:118.00px;font-size:9.25px;letter-spacing:0.0px"><span style="color:#007800">g2</span><span style="color:#101040">:</span><span style="color:#760000">petersen_graph</span><span style="color:#101040">(</span><span style="color:#7a3a00">7</span><span style="color:#101040">,</span><span style="color:#7a3a00">3</span><span style="color:#101040">)</span><span style="color:#8a8a8a">$</span></div>
<div class="t" style="left:187.2px;top:141px;font-size:8.5px;color:#f0646e;transform:scaleX(1.066);transform-origin:left">(%i5)</div>
<div class="t" style="left:217.5px;top:141.00px;font-size:9.25px;letter-spacing:0.0px"><span style="color:#760000">wxdraw</span><span style="color:#760000">(</span></div>
<div class="t" style="left:227.5px;top:152.00px;font-size:9.25px;letter-spacing:0.2px"><span style="color:#760000">gr2d</span><span style="color:#101040">(</span><span style="color:#760000">draw_graph</span><span style="color:#101040">(</span><span style="color:#007800">g1</span><span style="color:#101040">, </span><span style="color:#007800">transform</span><span style="color:#101040">=</span><span style="color:#760000">true</span><span style="color:#101040">)),</span></div>
<div class="t" style="left:227.5px;top:163.00px;font-size:9.25px;letter-spacing:0.2px"><span style="color:#760000">gr2d</span><span style="color:#101040">(</span><span style="color:#760000">draw_graph</span><span style="color:#101040">(</span><span style="color:#007800">g2</span><span style="color:#101040">, </span><span style="color:#007800">transform</span><span style="color:#101040">=</span><span style="color:#760000">true</span><span style="color:#101040">)),</span></div>
<div class="t" style="left:227.5px;top:174.00px;font-size:9.25px;letter-spacing:0.1px"><span style="color:#007800">columns</span><span style="color:#101040">=</span><span style="color:#7a3a00">2</span></div>
<div class="t" style="left:217.5px;top:185.00px;font-size:9.25px;letter-spacing:0.0px"><span style="color:#101040">);</span></div>
<div class="t" style="left:187.2px;top:246px;font-size:8.5px;color:#f8b070;transform:scaleX(1.066);transform-origin:left">(%t5)</div>
<svg style="left:0;top:0" width="752" height="423"><path d="M262.60 207.65L293.13 224.27M262.60 207.65L262.60 222.80M262.60 222.80L287.85 258.25M293.13 224.27L300.67 261.62M293.13 224.27L282.85 233.72M282.85 233.72L273.84 277.93M300.67 261.62L279.54 291.58M300.67 261.62L287.85 258.25M287.85 258.25L251.36 277.93M279.54 291.58L245.66 291.58M279.54 291.58L273.84 277.93M273.84 277.93L237.35 258.25M245.66 291.58L224.53 261.62M245.66 291.58L251.36 277.93M251.36 277.93L242.35 233.72M224.53 261.62L232.07 224.27M224.53 261.62L237.35 258.25M237.35 258.25L262.60 222.80M232.07 224.27L262.60 207.65M232.07 224.27L242.35 233.72M242.35 233.72L282.85 233.72" stroke="#2b2b2b" stroke-width="0.9" fill="none"/><circle cx="262.60" cy="207.65" r="2.15" fill="#f50000"/><circle cx="293.13" cy="224.27" r="2.15" fill="#f50000"/><circle cx="300.67" cy="261.62" r="2.15" fill="#f50000"/><circle cx="279.54" cy="291.58" r="2.15" fill="#f50000"/><circle cx="245.66" cy="291.58" r="2.15" fill="#f50000"/><circle cx="224.53" cy="261.62" r="2.15" fill="#f50000"/><circle cx="232.07" cy="224.27" r="2.15" fill="#f50000"/><circle cx="262.60" cy="222.80" r="2.15" fill="#f50000"/><circle cx="282.85" cy="233.72" r="2.15" fill="#f50000"/><circle cx="287.85" cy="258.25" r="2.15" fill="#f50000"/><circle cx="273.84" cy="277.93" r="2.15" fill="#f50000"/><circle cx="251.36" cy="277.93" r="2.15" fill="#f50000"/><circle cx="237.35" cy="258.25" r="2.15" fill="#f50000"/><circle cx="242.35" cy="233.72" r="2.15" fill="#f50000"/><path d="M367.00 207.65L397.53 224.27M367.00 207.65L367.00 222.80M367.00 222.80L378.24 277.93M397.53 224.27L405.07 261.62M397.53 224.27L387.25 233.72M387.25 233.72L355.76 277.93M405.07 261.62L383.94 291.58M405.07 261.62L392.25 258.25M392.25 258.25L341.75 258.25M383.94 291.58L350.06 291.58M383.94 291.58L378.24 277.93M378.24 277.93L346.75 233.72M350.06 291.58L328.93 261.62M350.06 291.58L355.76 277.93M355.76 277.93L367.00 222.80M328.93 261.62L336.47 224.27M328.93 261.62L341.75 258.25M341.75 258.25L387.25 233.72M336.47 224.27L367.00 207.65M336.47 224.27L346.75 233.72M346.75 233.72L392.25 258.25" stroke="#2b2b2b" stroke-width="0.9" fill="none"/><circle cx="367.00" cy="207.65" r="2.15" fill="#f50000"/><circle cx="397.53" cy="224.27" r="2.15" fill="#f50000"/><circle cx="405.07" cy="261.62" r="2.15" fill="#f50000"/><circle cx="383.94" cy="291.58" r="2.15" fill="#f50000"/><circle cx="350.06" cy="291.58" r="2.15" fill="#f50000"/><circle cx="328.93" cy="261.62" r="2.15" fill="#f50000"/><circle cx="336.47" cy="224.27" r="2.15" fill="#f50000"/><circle cx="367.00" cy="222.80" r="2.15" fill="#f50000"/><circle cx="387.25" cy="233.72" r="2.15" fill="#f50000"/><circle cx="392.25" cy="258.25" r="2.15" fill="#f50000"/><circle cx="378.24" cy="277.93" r="2.15" fill="#f50000"/><circle cx="355.76" cy="277.93" r="2.15" fill="#f50000"/><circle cx="341.75" cy="258.25" r="2.15" fill="#f50000"/><circle cx="346.75" cy="233.72" r="2.15" fill="#f50000"/></svg>
<div class="t" style="left:187.2px;top:305px;font-size:8.5px;color:#f8b070;transform:scaleX(1.066);transform-origin:left">(%o5)</div>
<div class="t" style="left:187.2px;top:327px;font-size:8.5px;color:#f0646e;transform:scaleX(1.066);transform-origin:left">(%i6)</div>
<div class="t" style="left:217.5px;top:327.00px;font-size:9.25px;letter-spacing:0.0px"><span style="color:#760000">is_isomorphic</span><span style="color:#101040">(</span><span style="color:#007800">g1</span><span style="color:#101040">,</span><span style="color:#007800">g2</span><span style="color:#101040">)</span><span style="color:#8a8a8a">;</span></div>
<div class="t" style="left:187.2px;top:340px;font-size:8.5px;color:#f8b070;transform:scaleX(1.066);transform-origin:left">(%o6)</div>
<div class="t" style="left:217.5px;top:339.00px;font-size:10px;font-weight:bold;font-style:italic;color:#000">true</div>
<div class="r" style="left:180px;top:355px;width:13px;height:1.3px;background:#111"></div>
<div class="r" style="left:640px;top:55px;width:2px;height:192px;background:#6a6a6a;border-radius:1px"></div>
<div class="r" style="left:176px;top:408px;width:460px;height:2px;background:#6a6a6a;border-radius:1px"></div>
<div class="r" style="left:644px;top:53px;width:3px;height:359px;background:#e3e7eb"></div>
<div class="r" style="left:647px;top:52px;width:104px;height:179px;background:#fdfefd;border:1px solid #c6cacd"></div>
<div class="r" style="left:648px;top:53px;width:102px;height:9px;background:linear-gradient(#e2e5e8,#d4d8dc 80%,#c9cdd1)"></div>
<div class="t" style="left:649.80px;top:54px;font-size:6px;color:#262626;font-weight:bold;font-style:normal;transform-origin:left;">Inhaltsverzeichnis</div>
<div class="r" style="left:648px;top:211px;width:103px;height:18px;background:#fff;border:1px solid #d6dadd;border-right:none"></div>
<div class="r" style="left:647px;top:234px;width:104px;height:178px;background:#fdfefd;border:1px solid #c6cacd"></div>
<div class="r" style="left:648px;top:235px;width:102px;height:8px;background:linear-gradient(#e2e5e8,#d4d8dc 80%,#c9cdd1)"></div>
<div class="t" style="left:649.60px;top:235px;font-size:7px;color:#1a1a1a;font-weight:normal;font-style:normal;transform:scaleX(0.91);transform-origin:left;">Variablen</div>
<div class="r" style="left:648px;top:300px;width:102px;height:111px;background:#f2f6f9"></div>
<div class="r" style="left:648px;top:243px;width:102px;height:11px;background:#e9eef3"></div>
<div class="r" style="left:648px;top:243px;width:36px;height:12px;border-right:1px solid #d6d6d6;background:#f9fbfc"></div>
<div class="r" style="left:684px;top:243px;width:28px;height:12px;border-right:1px solid #d6d6d6;background:#f9fbfc"></div>
<div class="r" style="left:648px;top:255px;width:64px;height:12px;border-right:1px solid #c8c8c8;border-bottom:1px solid #c8c8c8"></div>
<div class="r" style="left:683px;top:255px;width:1px;height:12px;background:#d0d0d0"></div>
<div class="r" style="left:648px;top:254px;width:64px;height:1px;background:#d8d8d8"></div>
<div class="t" style="left:650.80px;top:245px;font-size:8.5px;color:#1e1e1e;font-weight:bold;font-style:normal;transform:scaleX(0.93);transform-origin:left;">Variable</div>
<div class="t" style="left:686.80px;top:245px;font-size:8.5px;color:#1e1e1e;font-weight:bold;font-style:normal;transform:scaleX(0.96);transform-origin:left;">Inhalt</div>
<div class="t" style="left:2.70px;top:414px;font-size:8.5px;color:#333;font-weight:normal;font-style:normal;transform:scaleX(0.946);transform-origin:left;">Maxima ist bereit.</div>
<div class="t" style="left:586.50px;top:414px;font-size:8.5px;color:#333;font-weight:normal;font-style:normal;transform:scaleX(0.927);transform-origin:left;">Bereit für Benutzereingabe</div>
<svg style="left:0;top:0" width="752" height="423"><path d="M741 421 L749 413 M743 416 L746 419" stroke="#aab0b4" stroke-width="1"/></svg>
</body></html>
